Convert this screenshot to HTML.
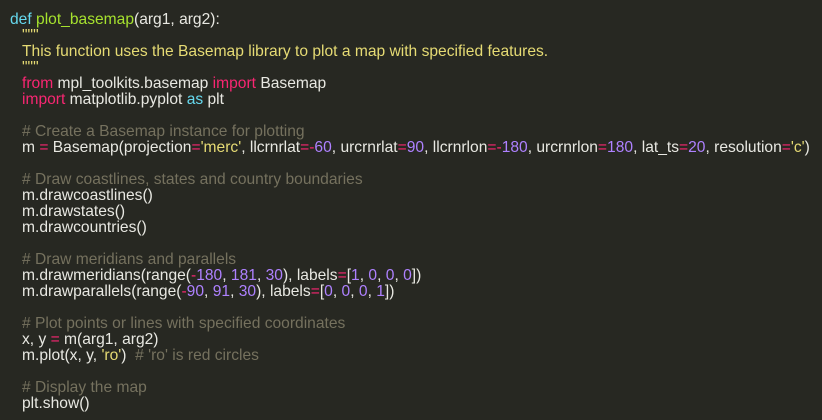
<!DOCTYPE html>
<html><head><meta charset="utf-8"><style>
html,body{margin:0;padding:0;background:#272822;width:822px;height:420px;overflow:hidden}
pre{margin:0;padding:12px 0 0 22px;font-family:"Liberation Sans",sans-serif;font-size:15.6px;line-height:16px;color:#e8e8e2;white-space:pre}
.t{margin-left:-12px}
.d{color:#66d9ef}.f{color:#a6e22e}.k{color:#f92672}.s{color:#e6db74}.n{color:#ae81ff}.c{color:#75715e}
</style></head><body><pre><span class="t"><span class="d">def</span> <span class="f">plot_basemap</span>(arg1, arg2):</span>
<span class="s">"""</span>
<span class="s">This function uses the Basemap library to plot a map with specified features.</span>
<span class="s">"""</span>
<span class="k">from</span> mpl_toolkits.basemap <span class="k">import</span> Basemap
<span class="k">import</span> matplotlib.pyplot <span class="d">as</span> plt

<span class="c"># Create a Basemap instance for plotting</span>
m <span class="k">=</span> Basemap(projection<span class="k">=</span><span class="s">'merc'</span>, llcrnrlat<span class="k">=-</span><span class="n">60</span>, urcrnrlat<span class="k">=</span><span class="n">90</span>, llcrnrlon<span class="k">=-</span><span class="n">180</span>, urcrnrlon<span class="k">=</span><span class="n">180</span>, lat_ts<span class="k">=</span><span class="n">20</span>, resolution<span class="k">=</span><span class="s">'c'</span>)

<span class="c"># Draw coastlines, states and country boundaries</span>
m.drawcoastlines()
m.drawstates()
m.drawcountries()

<span class="c"># Draw meridians and parallels</span>
m.drawmeridians(range(<span class="k">-</span><span class="n">180</span>, <span class="n">181</span>, <span class="n">30</span>), labels<span class="k">=</span>[<span class="n">1</span>, <span class="n">0</span>, <span class="n">0</span>, <span class="n">0</span>])
m.drawparallels(range(<span class="k">-</span><span class="n">90</span>, <span class="n">91</span>, <span class="n">30</span>), labels<span class="k">=</span>[<span class="n">0</span>, <span class="n">0</span>, <span class="n">0</span>, <span class="n">1</span>])

<span class="c"># Plot points or lines with specified coordinates</span>
x, y <span class="k">=</span> m(arg1, arg2)
m.plot(x, y, <span class="s">'ro'</span>)  <span class="c"># 'ro' is red circles</span>

<span class="c"># Display the map</span>
plt.show()</pre></body></html>
